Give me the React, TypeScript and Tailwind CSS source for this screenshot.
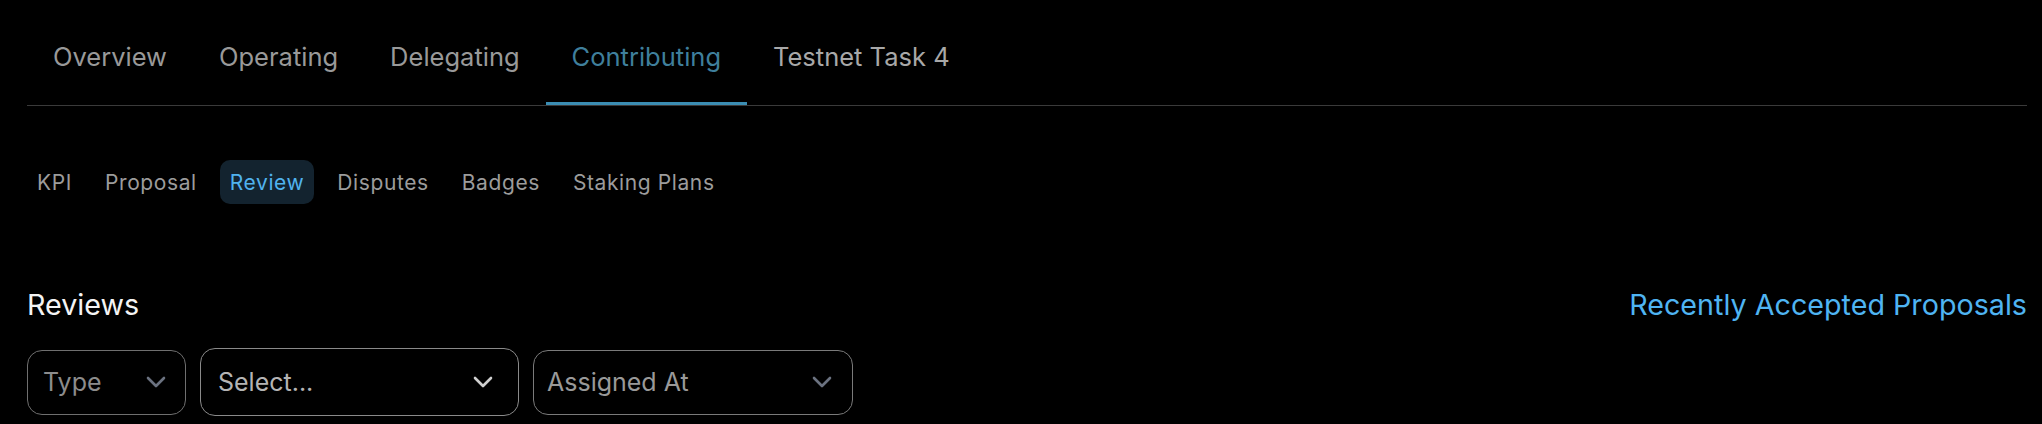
import React, { useState } from 'react';

const mainTabs = ['Overview', 'Operating', 'Delegating', 'Contributing', 'Testnet Task 4'];
const subTabs = ['KPI', 'Proposal', 'Review', 'Disputes', 'Badges', 'Staking Plans'];

const Chevron: React.FC<{ className?: string }> = ({ className = '' }) => (
  <svg width="20" height="12" viewBox="0 0 20 12" fill="none" className={className}>
    <polyline points="2,2 10,10 18,2" stroke="currentColor" strokeWidth="2.6" strokeLinecap="round" strokeLinejoin="round" />
  </svg>
);

interface SelectBoxProps {
  label: string;
  width: string;
  textColor: string;
  chevronColor: string;
}

const SelectBox: React.FC<SelectBoxProps> = ({ label, width, textColor, chevronColor }) => (
  <button className={`flex items-center justify-between rounded-[15px] border ${width}`}>
    <span className={`text-[25px] leading-[32px] ${textColor}`}>{label}</span>
    <Chevron className={chevronColor} />
  </button>
);

const App: React.FC = () => {
  const [tab, setTab] = useState('Contributing');
  const [sub, setSub] = useState('Review');

  return (
    <div className="min-h-screen bg-black font-['Inter',sans-serif] pt-[13px] pl-[27px] pr-[15px]">
      {/* Main tabs */}
      <div className="flex border-b border-[#3a3a3a]">
        {mainTabs.map((t) => (
          <button
            key={t}
            onClick={() => setTab(t)}
            className={`px-[26px] pt-[26px] pb-[27px] border-b-[3px] text-[25.5px] leading-[36px] ${
              tab === t
                ? 'border-[#3b8db3] text-[#3f7f9c]'
                : t === 'Testnet Task 4'
                  ? 'border-transparent text-[#a8a8a8]'
                  : 'border-transparent text-[#999999]'
            }`}
          >
            {t}
          </button>
        ))}
      </div>

      {/* Sub tabs */}
      <div className="mt-[54px] flex gap-[13px]">
        {subTabs.map((s) => (
          <button
            key={s}
            onClick={() => setSub(s)}
            className={`px-[10px] py-[6.5px] rounded-[10px] text-[21px] tracking-[0.6px] leading-[31px] ${
              sub === s ? 'bg-[#13232f] text-[#50b2ee]' : 'text-[#9c9c9c]'
            }`}
          >
            {s}
          </button>
        ))}
      </div>

      {/* Reviews header */}
      <div className="mt-[83px] flex items-center justify-between">
        <h2 className="text-[28.7px] leading-[36px] text-[#f4f4f4]">Reviews</h2>
        <a className="text-[28.7px] leading-[36px] text-[#4fb4f2] cursor-pointer">Recently Accepted Proposals</a>
      </div>

      {/* Filters */}
      <div className="mt-[25px] flex items-center gap-[14px]">
        <SelectBox
          label="Type"
          width="w-[159px] h-[65px] pl-[15px] pr-[19px] border-[#6f6f6f]"
          textColor="text-[#8c8c8c]"
          chevronColor="text-[#6b7280]"
        />
        <SelectBox
          label="Select..."
          width="w-[319px] h-[68px] pl-[17px] pr-[25px] border-[#8a8a8a]"
          textColor="text-[#b4b4b4]"
          chevronColor="text-[#cfcfcf]"
        />
        <SelectBox
          label="Assigned At"
          width="w-[320px] h-[65px] pl-[13px] pr-[20px] border-[#7a7a7a]"
          textColor="text-[#999999]"
          chevronColor="text-[#6b7280]"
        />
      </div>
    </div>
  );
};

export default App;
